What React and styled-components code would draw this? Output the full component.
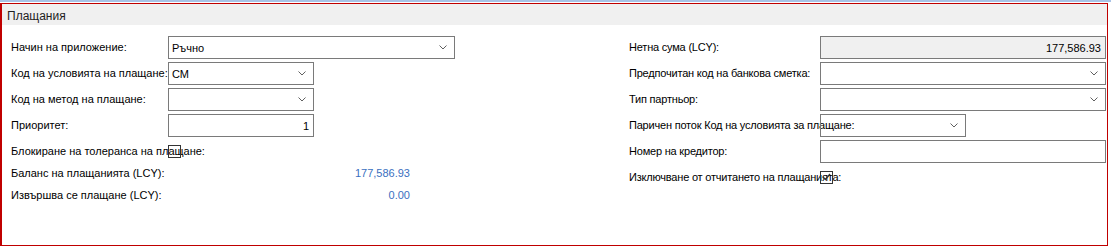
import React from 'react'
import styled, { createGlobalStyle } from 'styled-components'

const GlobalStyle = createGlobalStyle`
  body {
    margin: 0;
    background: #ffffff;
    font-family: "Liberation Sans", Arial, sans-serif;
    color: #000000;
  }
`

const TopLine = styled.div`
  height: 2px;
  background: #a9c3e6;
  margin-bottom: 1px;
`

const Frame = styled.div`
  box-sizing: border-box;
  width: 1108px;
  height: 243px;
  border: 1px solid #c00000;
  border-left-width: 2px;
`

const Header = styled.div`
  height: 18px;
  padding: 3px 0 0 5px;
  background: #f0f0f0;
  font-size: 12px;
  line-height: 18px;
  color: #1e1e1e;
`

const Body = styled.div`
  display: flex;
  padding: 11px 0 0 9px;
`

const Pane = styled.div`
  display: flex;
  flex-direction: column;
  width: ${p => p.$w}px;
`

const Row = styled.div`
  display: grid;
  grid-template-columns: ${p => p.$label}px auto;
  align-items: ${p => (p.$tall ? 'start' : 'center')};
  height: ${p => (p.$tall ? 26 : 22)}px;
  font-size: 11px;
`

const Label = styled.div`
  white-space: nowrap;
  line-height: ${p => (p.$tall ? 23 : 22)}px;
  letter-spacing: ${p => p.$tight || 0}px;
`

const Box = styled.div`
  box-sizing: border-box;
  width: ${p => p.$w}px;
  height: 23px;
  border: 1px solid #7a7a7a;
  background: ${p => (p.$readonly ? '#f0f0f0' : 'transparent')};
  display: flex;
  align-items: center;
  justify-content: ${p => (p.$right ? 'flex-end' : 'space-between')};
  padding: 0 ${p => (p.$right ? 4 : 7)}px 0 3px;
  font-size: 11px;
  color: #000000;
`

const Check = styled.div`
  box-sizing: border-box;
  width: 13px;
  height: 13px;
  border: 1px solid #333333;
  display: flex;
  align-items: center;
  justify-content: center;
`

const Value = styled.div`
  width: 242px;
  text-align: right;
  color: #3a6fc0;
  line-height: 22px;
`

const Chevron = () => (
  <svg width="8" height="5" viewBox="0 0 8 5">
    <polyline points="0.5,0.5 4,4 7.5,0.5" fill="none" stroke="#606060" strokeWidth="1" />
  </svg>
)

const Tick = () => (
  <svg width="9" height="8" viewBox="0 0 9 8">
    <polyline points="1,4 3.5,6.5 8,1" fill="none" stroke="#333333" strokeWidth="1.4" />
  </svg>
)

function Dropdown ({ w, children }) {
  return (
    <Box $w={w}>
      <span>{children}</span>
      <Chevron />
    </Box>
  )
}

export default function App () {
  return (
    <>
      <GlobalStyle />
      <TopLine />
      <Frame>
        <Header>Плащания</Header>
        <Body>
          <Pane $w={618}>
            <Row $label={157} $tall>
              <Label $tall>Начин на приложение:</Label>
              <Dropdown w={287}>Ръчно</Dropdown>
            </Row>
            <Row $label={157} $tall>
              <Label $tall>Код на условията на плащане:</Label>
              <Dropdown w={146}>СМ</Dropdown>
            </Row>
            <Row $label={157} $tall>
              <Label $tall>Код на метод на плащане:</Label>
              <Dropdown w={146} />
            </Row>
            <Row $label={157} $tall>
              <Label $tall>Приоритет:</Label>
              <Box $w={146} $right>1</Box>
            </Row>
            <Row $label={157}>
              <Label>Блокиране на толеранса на плащане:</Label>
              <Check />
            </Row>
            <Row $label={157}>
              <Label>Баланс на плащанията (LCY):</Label>
              <Value>177,586.93</Value>
            </Row>
            <Row $label={157}>
              <Label>Извършва се плащане (LCY):</Label>
              <Value>0.00</Value>
            </Row>
          </Pane>
          <Pane $w={478}>
            <Row $label={191} $tall>
              <Label $tall $tight={-0.2}>Нетна сума (LCY):</Label>
              <Box $w={286} $readonly $right>177,586.93</Box>
            </Row>
            <Row $label={191} $tall>
              <Label $tall $tight={-0.2}>Предпочитан код на банкова сметка:</Label>
              <Dropdown w={286} />
            </Row>
            <Row $label={191} $tall>
              <Label $tall $tight={-0.2}>Тип партньор:</Label>
              <Dropdown w={286} />
            </Row>
            <Row $label={191} $tall>
              <Label $tall $tight={-0.2}>Паричен поток Код на условията за плащане:</Label>
              <Dropdown w={146} />
            </Row>
            <Row $label={191} $tall>
              <Label $tall $tight={-0.2}>Номер на кредитор:</Label>
              <Box $w={286} />
            </Row>
            <Row $label={191}>
              <Label $tight={-0.2}>Изключване от отчитането на плащанията:</Label>
              <Check><Tick /></Check>
            </Row>
          </Pane>
        </Body>
      </Frame>
    </>
  )
}
